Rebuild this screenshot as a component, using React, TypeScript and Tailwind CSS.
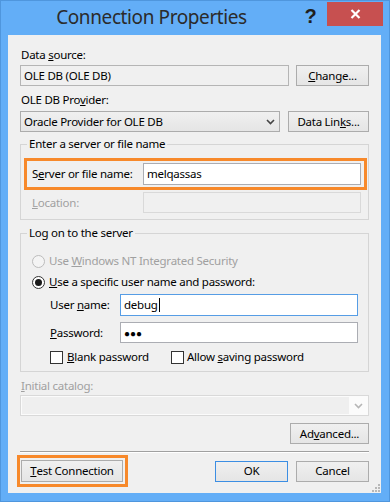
import React from 'react';

const Chevron = ({ color = '#444' }: { color?: string }) => (
  <svg width="9" height="6" viewBox="0 0 9 6">
    <path d="M1 1 L4.5 4.5 L8 1" fill="none" stroke={color} strokeWidth="1.6" />
  </svg>
);

const Btn = ({
  children,
  className = '',
  primary = false,
}: {
  children: React.ReactNode;
  className?: string;
  primary?: boolean;
}) => (
  <button
    className={`flex items-center justify-center border bg-linear-to-b from-[#f0f0f0] to-[#e5e5e5] leading-none text-black ${
      primary ? 'border-[#3c8ee3]' : 'border-[#acacac]'
    } ${className}`}
  >
    {children}
  </button>
);

const Radio = ({ checked = false, disabled = false }: { checked?: boolean; disabled?: boolean }) => (
  <span
    className={`flex h-[13px] w-[13px] shrink-0 items-center justify-center rounded-full border ${
      disabled ? 'border-[#bcbcbc] bg-[#f4f4f4]' : 'border-[#333333] bg-white'
    }`}
  >
    {checked && <span className="h-[7px] w-[7px] rounded-full bg-[#1a1a1a]" />}
  </span>
);

const Check = () => <span className="h-[13px] w-[13px] shrink-0 border border-[#333333] bg-white" />;

export default function App() {
  return (
    <div className="flex h-[502px] w-[390px] flex-col border border-[#4f96dd] bg-[#63aef7] [font-family:'Noto_Sans',sans-serif] text-black">
      {/* Title bar */}
      <div className="flex h-[34px] shrink-0">
        <div className="flex flex-1 items-center justify-center pb-px text-[19px] tracking-[-0.4px] text-[#2b2b2b]">
          Connection Properties
        </div>
        <div className="flex w-[25px] items-start justify-center pr-[8px] pt-[4px] text-[20px] font-bold leading-[22px] text-[#1f1f1f] [font-family:'Liberation_Sans',sans-serif]">
          ?
        </div>
        <div className="mr-[6px] mt-px flex h-[24px] w-[56px] items-center justify-center bg-[#c75050]">
          <svg width="11" height="10" viewBox="0 0 11 10">
            <path d="M1.5 1 L9.5 9 M9.5 1 L1.5 9" stroke="#fff" strokeWidth="2.2" />
          </svg>
        </div>
      </div>

      {/* Client area */}
      <div className="relative ml-[7px] mr-[8px] flex h-[458px] flex-col bg-[#f0f0f0] px-3 pt-[12px] text-[11.5px] tracking-[-0.25px]">
        <div className="ml-px h-[16px] leading-[16px]">
          Data <u>s</u>ource:
        </div>
        <div className="mt-[2px] flex h-[21px] items-center">
          <div className="flex h-[21px] w-[269px] items-center border border-[#b5b5b5] bg-[#f0f0f0] pl-[3px] leading-none">
            OLE DB (OLE DB)
          </div>
          <Btn className="ml-auto h-[21px] w-[73px]">
            <u>C</u>hange...
          </Btn>
        </div>

        <div className="ml-px mt-[6px] h-[16px] leading-[16px]">
          OLE DB Pro<u>v</u>ider:
        </div>
        <div className="mt-[3px] flex h-[21px] items-center">
          <div className="flex h-[21px] w-[260px] items-center justify-between border border-[#acacac] bg-linear-to-b from-[#f0f0f0] to-[#e5e5e5] pl-[3px] pr-[4px] leading-none">
            <span>Oracle Provider for OLE DB</span>
            <Chevron />
          </div>
          <Btn className="ml-auto h-[21px] w-[81px]">
            Data Lin<u>k</u>s...
          </Btn>
        </div>

        <fieldset className="mt-[4px] border border-[#d5d5d5] pb-[6px]">
          <legend className="ml-[6px] h-[16px] px-[2px] leading-[16px]">Enter a server or file name</legend>
          <div className="ml-[3px] mr-px mt-[6px] flex h-[32px] items-center border-[3px] border-[#f7892b] pl-[5px] pr-[3px]">
            <span className="leading-none">
              S<u>e</u>rver or file name:
            </span>
            <div className="ml-auto flex h-[22px] w-[218px] items-center border border-[#abadb3] bg-white pl-[3px] leading-none">
              melqassas
            </div>
          </div>
          <div className="mt-[2px] flex h-[21px] items-center pl-[11px] pr-[7px]">
            <span className="leading-none text-[#a0a0a0]">
              <u>L</u>ocation:
            </span>
            <div className="ml-auto h-[21px] w-[218px] border border-[#d9d9d9] bg-[#f0f0f0]" />
          </div>
        </fieldset>

        <fieldset className="mt-[5px] border border-[#d5d5d5] pb-[6px]">
          <legend className="ml-[6px] h-[16px] px-[2px] leading-[16px]">Log on to the server</legend>
          <div className="mt-[12px] flex h-[16px] items-center gap-[4px] pl-[11px] text-[#a0a0a0]">
            <Radio disabled />
            <span className="leading-none">
              Use <u>W</u>indows NT Integrated Security
            </span>
          </div>
          <div className="mt-[5px] flex h-[16px] items-center gap-[4px] pl-[11px]">
            <Radio checked />
            <span className="leading-none">
              <u>U</u>se a specific user name and password:
            </span>
          </div>
          <div className="mt-[4px] flex h-[22px] items-center pl-[29px] pr-[10px]">
            <span className="leading-none">
              User <u>n</u>ame:
            </span>
            <div className="ml-auto flex h-[22px] w-[238px] items-center border border-[#569de5] bg-white pl-[3px] leading-none">
              debug
              <span className="ml-px h-[14px] w-px bg-black" />
            </div>
          </div>
          <div className="mt-[6px] flex h-[21px] items-center pl-[29px] pr-[10px]">
            <span className="leading-none">
              <u>P</u>assword:
            </span>
            <div className="ml-auto flex h-[21px] w-[238px] items-center border border-[#abadb3] bg-white pl-[3px] text-[10px] leading-none tracking-[0px]">
              ●●●
            </div>
          </div>
          <div className="mt-[6px] flex h-[16px] items-center pl-[29px]">
            <div className="flex w-[121px] items-center gap-[4px]">
              <Check />
              <span className="leading-none">
                <u>B</u>lank password
              </span>
            </div>
            <div className="flex items-center gap-[3px]">
              <Check />
              <span className="leading-none">
                Allow <u>s</u>aving password
              </span>
            </div>
          </div>
        </fieldset>

        <div className="ml-px mt-[6px] h-[16px] leading-[16px] text-[#a0a0a0]">
          <u>I</u>nitial catalog:
        </div>
        <div className="mt-[1px] flex h-[21px] border border-[#d9d9d9] bg-[#fbfbfb] p-px">
          <div className="flex-1 bg-[#efefef]" />
          <div className="flex w-[18px] items-center justify-center">
            <Chevron color="#b5b5b5" />
          </div>
        </div>

        <div className="mt-[7px] flex justify-end">
          <Btn className="h-[21px] w-[79px]">
            Ad<u>v</u>anced...
          </Btn>
        </div>

        <div className="mt-[7px] h-[2px] border-t border-b border-t-[#a0a0a0] border-b-white" />

        <div className="mt-[2px] flex items-center">
          <div className="-ml-[3px] flex h-[32px] w-[111px] items-center border-[3px] border-[#f7892b] pl-px">
            <Btn className="h-[22px] w-[102px]">
              <u>T</u>est Connection
            </Btn>
          </div>
          <Btn primary className="ml-auto h-[21px] w-[73px]">
            OK
          </Btn>
          <Btn className="ml-[8px] h-[21px] w-[73px]">Cancel</Btn>
        </div>

        {/* size grip */}
        <svg className="absolute bottom-[1px] right-[1px]" width="9" height="9" viewBox="0 0 9 9">
          <g fill="#b8b8b8">
            <rect x="7" y="1" width="2" height="2" />
            <rect x="4" y="4" width="2" height="2" />
            <rect x="7" y="4" width="2" height="2" />
            <rect x="1" y="7" width="2" height="2" />
            <rect x="4" y="7" width="2" height="2" />
            <rect x="7" y="7" width="2" height="2" />
          </g>
        </svg>
      </div>
    </div>
  );
}
